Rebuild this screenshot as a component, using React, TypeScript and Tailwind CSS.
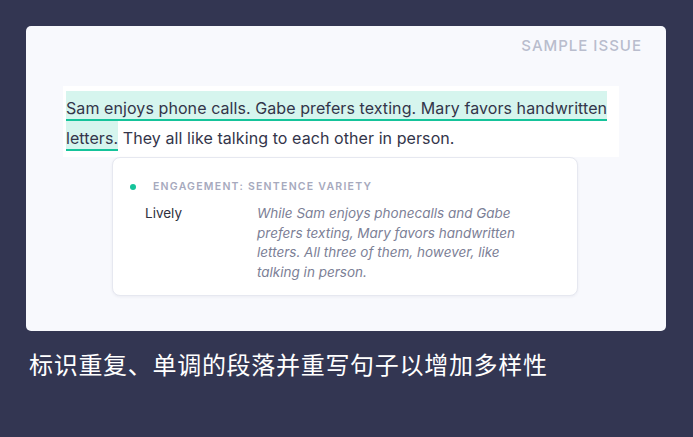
export default function App() {
  return (
    <div className="w-[693px] h-[437px] bg-[#333652] pt-[26px] px-[26px] font-['Inter',sans-serif]">
      <div className="w-[640px] h-[305px] rounded-[5px] bg-[#f8f9fd] pt-[10px]">
        <div className="flex justify-end pr-[24px]">
          <span className="text-[15px] leading-[20px] font-medium tracking-[1px] text-[#b9bdcd]">SAMPLE ISSUE</span>
        </div>

        <div className="ml-[37px] mt-[30px] w-[556px] bg-white pl-[3px] pt-[7px] pb-[4px]">
          <p className="text-[16px] leading-[30px] tracking-[0.08px] text-[#33354a]">
            <span className="bg-[#d6f5ee] border-b-2 border-[#15c39a] pt-[7px] pb-[1px] box-decoration-clone">
              Sam enjoys phone calls. Gabe prefers texting. Mary favors handwritten letters.
            </span>{" "}
            They all like talking to each other in person.
          </p>
        </div>

        <div className="ml-[86px] w-[466px] h-[139px] rounded-[8px] border border-[#e6e8f0] bg-white pt-[22px] shadow-[0_1px_3px_rgba(30,40,90,0.06)]">
          <div className="flex items-center pl-[17px]">
            <span className="w-[6px] h-[6px] rounded-full bg-[#15c39a]" />
            <span className="ml-[17px] text-[10.5px] leading-[14px] font-semibold tracking-[1.25px] text-[#a6a9bd]">
              ENGAGEMENT: SENTENCE VARIETY
            </span>
          </div>
          <div className="flex mt-[10px] text-[13.5px] leading-[19.5px]">
            <div className="w-[144px] pl-[32px] text-[#2f3140]">Lively</div>
            <div className="italic text-[#7c8096]">
              <div>While Sam enjoys phonecalls and Gabe</div>
              <div>prefers texting, Mary favors handwritten</div>
              <div>letters. All three of them, however, like</div>
              <div>talking in person.</div>
            </div>
          </div>
        </div>
      </div>

      <p className="mt-[17px] pl-[3px] text-[24px] leading-[32px] tracking-[0.7px] text-white font-['Noto_Sans_CJK_SC',sans-serif]">
        标识重复、单调的段落并重写句子以增加多样性
      </p>
    </div>
  );
}
